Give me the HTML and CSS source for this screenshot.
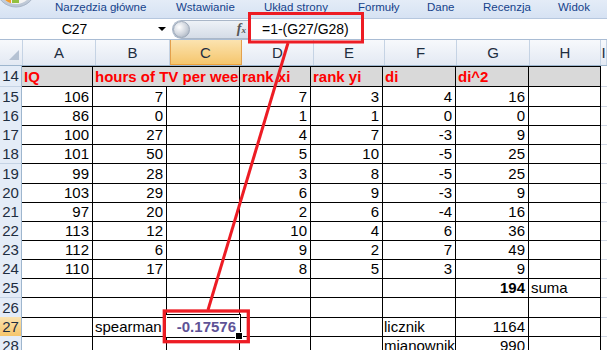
FILE: index.html
```html
<!DOCTYPE html>
<html lang="pl">

<head>
    <meta charset="UTF-8">
    <title>Spearman - Excel</title>
    <link rel="stylesheet" href="styles.css">
</head>

<body>
    <div class="window">
        <div class="tabs">
            <svg class="office-btn" width="55" height="18" viewBox="0 0 55 18">
                <defs>
                    <linearGradient id="ring" x1="0" y1="0" x2="0" y2="1">
                        <stop offset="0" stop-color="#f4f6fa" />
                        <stop offset="1" stop-color="#b9c4d3" />
                    </linearGradient>
                    <clipPath id="inner">
                        <circle cx="16" cy="-13" r="17" />
                    </clipPath>
                </defs>
                <circle cx="16" cy="-13" r="20" fill="url(#ring)" stroke="#a9b6c8" />
                <circle cx="16" cy="-13" r="17" fill="#f3f3f3" />
                <g clip-path="url(#inner)">
                    <rect x="3" y="-8" width="8" height="11" fill="#f39a2b" />
                    <rect x="12" y="-8" width="7" height="11" fill="#93c03f" />
                </g>
            </svg>
            <span class="tab">Narzędzia główne</span>
            <span class="tab">Wstawianie</span>
            <span class="tab">Układ strony</span>
            <span class="tab">Formuły</span>
            <span class="tab">Dane</span>
            <span class="tab">Recenzja</span>
            <span class="tab">Widok</span>
        </div>

        <div class="formula-bar">
            <div class="name-box">C27</div>
            <span class="name-arrow"></span>
            <div class="fx-box">
                <span class="knob"></span>
                <span class="fx">f<small>x</small></span>
            </div>
            <div class="formula">=1-(G27/G28)</div>
        </div>

        <div class="col-heads">
            <div class="ch corner">
                <svg width="22" height="25" viewBox="0 0 22 25">
                    <polygon points="9,20 19,20 19,10" fill="#b5c2d3" />
                </svg>
            </div>
            <div class="ch">A</div>
            <div class="ch">B</div>
            <div class="ch sel">C</div>
            <div class="ch">D</div>
            <div class="ch">E</div>
            <div class="ch">F</div>
            <div class="ch">G</div>
            <div class="ch">H</div>
            <div class="ch">I</div>
        </div>

        <div class="sheet">
            <div class="row head-row">
                <div class="rh">14</div>
                <div class="c">IQ</div>
                <div class="c span2">hours of TV per week</div>
                <div class="c">rank xi</div>
                <div class="c">rank yi</div>
                <div class="c">di</div>
                <div class="c">di^2</div>
                <div class="c"></div>
                <div class="x"></div>
            </div>
            <div class="row">
                <div class="rh">15</div>
                <div class="c n">106</div><div class="c n">7</div><div class="c"></div>
                <div class="c n">7</div><div class="c n">3</div><div class="c n">4</div>
                <div class="c n">16</div><div class="c"></div><div class="x"></div>
            </div>
            <div class="row">
                <div class="rh">16</div>
                <div class="c n">86</div><div class="c n">0</div><div class="c"></div>
                <div class="c n">1</div><div class="c n">1</div><div class="c n">0</div>
                <div class="c n">0</div><div class="c"></div><div class="x"></div>
            </div>
            <div class="row">
                <div class="rh">17</div>
                <div class="c n">100</div><div class="c n">27</div><div class="c"></div>
                <div class="c n">4</div><div class="c n">7</div><div class="c n">-3</div>
                <div class="c n">9</div><div class="c"></div><div class="x"></div>
            </div>
            <div class="row">
                <div class="rh">18</div>
                <div class="c n">101</div><div class="c n">50</div><div class="c"></div>
                <div class="c n">5</div><div class="c n">10</div><div class="c n">-5</div>
                <div class="c n">25</div><div class="c"></div><div class="x"></div>
            </div>
            <div class="row">
                <div class="rh">19</div>
                <div class="c n">99</div><div class="c n">28</div><div class="c"></div>
                <div class="c n">3</div><div class="c n">8</div><div class="c n">-5</div>
                <div class="c n">25</div><div class="c"></div><div class="x"></div>
            </div>
            <div class="row">
                <div class="rh">20</div>
                <div class="c n">103</div><div class="c n">29</div><div class="c"></div>
                <div class="c n">6</div><div class="c n">9</div><div class="c n">-3</div>
                <div class="c n">9</div><div class="c"></div><div class="x"></div>
            </div>
            <div class="row">
                <div class="rh">21</div>
                <div class="c n">97</div><div class="c n">20</div><div class="c"></div>
                <div class="c n">2</div><div class="c n">6</div><div class="c n">-4</div>
                <div class="c n">16</div><div class="c"></div><div class="x"></div>
            </div>
            <div class="row">
                <div class="rh">22</div>
                <div class="c n">113</div><div class="c n">12</div><div class="c"></div>
                <div class="c n">10</div><div class="c n">4</div><div class="c n">6</div>
                <div class="c n">36</div><div class="c"></div><div class="x"></div>
            </div>
            <div class="row">
                <div class="rh">23</div>
                <div class="c n">112</div><div class="c n">6</div><div class="c"></div>
                <div class="c n">9</div><div class="c n">2</div><div class="c n">7</div>
                <div class="c n">49</div><div class="c"></div><div class="x"></div>
            </div>
            <div class="row">
                <div class="rh">24</div>
                <div class="c n">110</div><div class="c n">17</div><div class="c"></div>
                <div class="c n">8</div><div class="c n">5</div><div class="c n">3</div>
                <div class="c n">9</div><div class="c"></div><div class="x"></div>
            </div>
            <div class="row">
                <div class="rh">25</div>
                <div class="c"></div><div class="c"></div><div class="c"></div>
                <div class="c"></div><div class="c"></div><div class="c"></div>
                <div class="c n b">194</div><div class="c">suma</div><div class="x"></div>
            </div>
            <div class="row">
                <div class="rh">26</div>
                <div class="c"></div><div class="c"></div><div class="c"></div>
                <div class="c"></div><div class="c"></div><div class="c"></div>
                <div class="c"></div><div class="c"></div><div class="x"></div>
            </div>
            <div class="row">
                <div class="rh sel">27</div>
                <div class="c"></div><div class="c">spearman</div>
                <div class="c n picked">-0.17576</div>
                <div class="c"></div><div class="c"></div><div class="c tight">licznik</div>
                <div class="c n">1164</div><div class="c"></div><div class="x"></div>
            </div>
            <div class="row">
                <div class="rh">28</div>
                <div class="c"></div><div class="c"></div><div class="c"></div>
                <div class="c"></div><div class="c"></div><div class="c tight">mianownik</div>
                <div class="c n">990</div><div class="c"></div><div class="x"></div>
            </div>
        </div>

        <!-- red marks drawn over the screenshot -->
        <svg class="marks" width="607" height="362" viewBox="0 0 607 362">
            <rect x="249.5" y="13.5" width="113" height="28.5" fill="none" stroke="#ed1c24" stroke-width="3" />
            <line x1="288" y1="43" x2="208" y2="310" stroke="#ed1c24" stroke-width="3" />
            <rect x="164.3" y="311" width="84" height="30.7" fill="none" stroke="#ed1c24" stroke-width="3.3" />
        </svg>
    </div>
</body>

</html>
```

FILE: styles.css
```css
/* styles.css */

* {
    box-sizing: border-box;
}

body {
    margin: 0;
    background-color: #ffffff;
    font-family: "Liberation Sans", Arial, sans-serif;
}

.window {
    position: relative;
    width: 607px;
    height: 362px;
    overflow: hidden;
}

/* ribbon tabs */
.tabs {
    display: grid;
    grid-template-columns: 55px 121px 88px 94px 69px 56px 75px 1fr;
    height: 19px;
    background: linear-gradient(#e4ecf7, #d6e2f3);
    border-bottom: 1px solid #b6c7de;
    font-size: 11.5px;
    line-height: 14px;
    color: #15428b;
    white-space: nowrap;
}

.office-btn {
    display: block;
}

/* formula bar */
.formula-bar {
    display: flex;
    align-items: center;
    height: 21px;
    background-color: #ffffff;
    border-bottom: 1px solid #a9bcd4;
}

.name-box {
    width: 149px;
    text-align: center;
    font-size: 14px;
    line-height: 20px;
}

.name-arrow {
    margin-left: 9px;
    width: 0;
    height: 0;
    border-top: 4px solid #000;
    border-left: 4px solid transparent;
    border-right: 4px solid transparent;
}

.fx-box {
    display: flex;
    align-items: center;
    margin-left: 6px;
    width: 78px;
    height: 19px;
    border: 1px solid #aab7c8;
    border-right: none;
    border-radius: 10px 0 0 10px;
    background: linear-gradient(#eef2f7, #d4dce7);
}

.knob {
    width: 17px;
    height: 17px;
    border-radius: 50%;
    background: radial-gradient(circle at 35% 35%, #ffffff, #cdd3dc 55%, #98a3b2);
    border: 1px solid #9da9b9;
}

.fx {
    margin-left: auto;
    margin-right: 4px;
    font-family: "Liberation Serif", serif;
    font-style: italic;
    font-weight: bold;
    font-size: 14px;
    line-height: 14px;
    color: #555;
}

.fx small {
    font-size: 9px;
}

.formula {
    flex: 1;
    height: 20px;
    padding-left: 11px;
    border-left: 1px solid #aab7c8;
    font-size: 14px;
    line-height: 20px;
}

/* column headers */
.col-heads {
    display: grid;
    grid-template-columns: 23px 73px 74px 72px 72px 71px 72px 73px 71px 1fr;
    height: 26px;
    background: linear-gradient(#f7f9fc, #e3e9f3);
    border-bottom: 1px solid #9eb6ce;
}

.ch {
    border-right: 1px solid #c5d3e4;
    text-align: center;
    font-size: 15px;
    line-height: 25px;
    color: #1e2d40;
}

.ch.sel {
    background: linear-gradient(#fbe3b0, #f5c56b);
    border-right-color: #e3a04c;
    box-shadow: inset 1px 0 #e3a04c, inset 0 -1px #f0a43c;
}

.corner svg {
    display: block;
}

/* sheet grid */
.sheet {
    height: 284px;
    overflow: hidden;
}

.row {
    display: grid;
    grid-template-columns: 22px 71px 74px 73px 71px 72px 73px 73px 72px 1fr;
    height: 19.15px;
}

.head-row {
    height: 21px;
}

.rh {
    background-color: #e4ecf7;
    border-right: 1px solid #9eb6ce;
    border-bottom: 1px solid #c5d3e4;
    text-align: center;
    font-size: 15px;
    line-height: 18px;
    padding-top: 1px;
    color: #1e2d40;
}

.rh.sel {
    background: linear-gradient(#fbe3b0, #f5c56b);
    border-bottom-color: #e3a04c;
}

.c {
    border-right: 1px solid #000;
    border-bottom: 1px solid #000;
    padding: 1px 3px 0 2px;
    font-size: 15px;
    line-height: 18px;
    white-space: nowrap;
}

.tight {
    padding-left: 1px;
}

.n {
    text-align: right;
}

.b {
    font-weight: bold;
}

.head-row .c {
    border-top: 1px solid #000;
    background-color: #d9d9d9;
    color: #ff0000;
    font-weight: bold;
    overflow: hidden;
}

.span2 {
    grid-column: span 2;
}

.x {
    border-bottom: 1px solid #d0d7e5;
}

/* active cell */
.picked {
    position: relative;
    color: #5e5296;
    font-weight: bold;
}

.picked::before {
    content: "";
    position: absolute;
    left: -2px;
    top: -3px;
    right: -2px;
    bottom: -2px;
    border: 1px solid #000;
    box-shadow: inset 0 0 0 1px #fff;
}

.picked::after {
    content: "";
    position: absolute;
    right: -4px;
    bottom: -4px;
    width: 6px;
    height: 6px;
    background-color: #000;
    border: 1px solid #fff;
}

.marks {
    position: absolute;
    top: 0;
    left: 0;
    pointer-events: none;
}
```
